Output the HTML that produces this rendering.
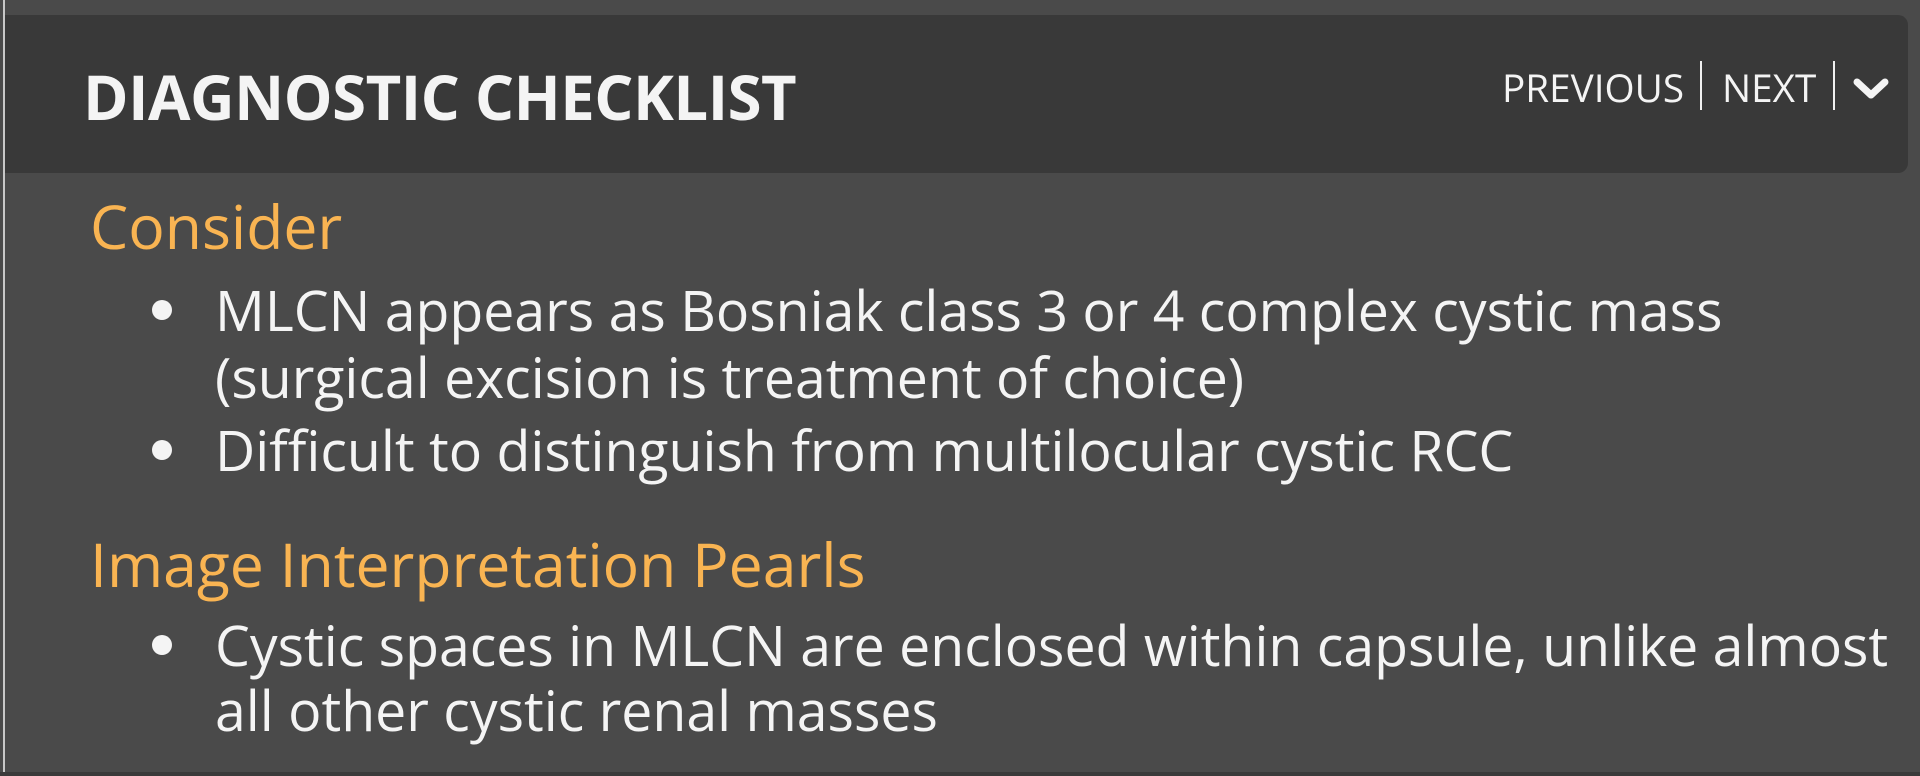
<!DOCTYPE html>
<html><head><meta charset="utf-8"><style>
html,body{margin:0;padding:0;}
body{width:1920px;height:776px;background:#4a4a4a;position:relative;overflow:hidden;font-family:"Open Sans","Liberation Sans",sans-serif;color:#f4f4f4;}
.lb{position:absolute;left:3px;top:0;width:2px;height:776px;background:#c8c8c8;}
.bb{position:absolute;left:0;top:772px;width:1920px;height:4px;background:#3a3a3a;}
.hdr{position:absolute;left:5px;top:15px;width:1903px;height:158px;background:#393939;border-radius:0 10px 10px 0;}
.t{position:absolute;white-space:nowrap;}
.title{left:83px;top:55px;font-size:61.6px;font-weight:bold;letter-spacing:-0.5px;}
.nav{font-size:38.7px;top:62px;}
.sep{position:absolute;width:2px;background:#f0f0f0;top:61px;height:49px;}
.h{color:#f9b452;font-size:60.7px;}
.b{font-size:55.4px;}
.dot{position:absolute;width:20px;height:20px;border-radius:50%;background:#f4f4f4;}
</style></head><body>
<div class="lb"></div><div class="bb"></div>
<div class="hdr"></div>
<div class="t title">DIAGNOSTIC CHECKLIST</div>
<div class="t nav" style="left:1502px">PREVIOUS</div>
<div class="sep" style="left:1700px"></div>
<div class="t nav" style="left:1722px">NEXT</div>
<div class="sep" style="left:1833px"></div>
<svg style="position:absolute;left:1853px;top:78px" width="36" height="22" viewBox="0 0 36 22"><path d="M4 4 L18 17 L32 4" fill="none" stroke="#f4f4f4" stroke-width="7" stroke-linecap="round" stroke-linejoin="round"/></svg>

<div class="t h" style="left:90px;top:184px">Consider</div>
<div class="dot" style="left:152px;top:300px"></div>
<div class="t b" style="left:215px;top:273px">MLCN appears as Bosniak class 3 or 4 complex cystic mass</div>
<div class="t b" style="left:215px;top:340px">(surgical excision is treatment of choice)</div>
<div class="dot" style="left:152px;top:440px"></div>
<div class="t b" style="left:215px;top:413px">Difficult to distinguish from multilocular cystic RCC</div>
<div class="t h" style="left:90px;top:522px">Image Interpretation Pearls</div>
<div class="dot" style="left:152px;top:635px"></div>
<div class="t b" style="left:215px;top:608px">Cystic spaces in MLCN are enclosed within capsule, unlike almost</div>
<div class="t b" style="left:215px;top:673px">all other cystic renal masses</div>
</body></html>
